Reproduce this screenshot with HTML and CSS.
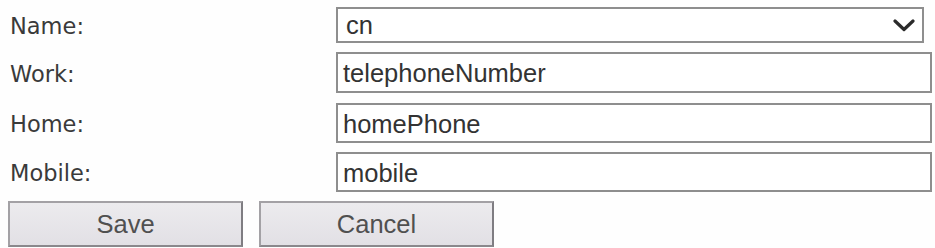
FILE: index.html
```html
<!DOCTYPE html>
<html>
<head>
<meta charset="utf-8">
<link rel="stylesheet" href="styles.css">
</head>
<body>
<div class="form">
  <div class="row r1">
    <div class="label">Name:</div>
    <div class="select"><span class="val">cn</span>
      <svg class="chev" width="22" height="13" viewBox="0 0 22 13"><path d="M2 2 L11 10.5 L20 2" fill="none" stroke="#2b2b2b" stroke-width="3.2" stroke-linecap="round" stroke-linejoin="round"/></svg>
    </div>
  </div>
  <div class="row r2">
    <div class="label">Work:</div>
    <div class="input">telephoneNumber</div>
  </div>
  <div class="row r3">
    <div class="label">Home:</div>
    <div class="input">homePhone</div>
  </div>
  <div class="row r4">
    <div class="label">Mobile:</div>
    <div class="input">mobile</div>
  </div>
  <div class="buttons">
    <div class="btn save">Save</div>
    <div class="btn cancel">Cancel</div>
  </div>
</div>
</body>
</html>
```
FILE: styles.css
```css
html, body {
  margin: 0;
  padding: 0;
  background: #fefefe;
  overflow: hidden;
}
.form {
  width: 935px;
  height: 248px;
  padding-top: 7px;
  box-sizing: border-box;
}
.row {
  display: flex;
  align-items: center;
  margin-bottom: 9px;
}
.r1 { height: 36px; }
.r2 { height: 41px; margin-bottom: 10px; }
.r3 { height: 40px; }
.r4 { height: 40px; }
.label {
  width: 326px;
  padding-left: 10px;
  box-sizing: border-box;
  font-family: "DejaVu Sans", Verdana, sans-serif;
  font-size: 22.5px;
  color: #3a3a3a;
  padding-top: 2px;
}
.select, .input {
  box-sizing: border-box;
  height: 100%;
  border: 2px solid #8e8e8e;
  background: #ffffff;
  font-family: "Liberation Sans", Arial, sans-serif;
  font-size: 25.5px;
  color: #333333;
  display: flex;
  align-items: center;
}
.select {
  margin-left: 10px;
  width: 588px;
  padding: 0 8px 0 8px;
  justify-content: space-between;
}
.select .val { padding-top: 1px; }
.input {
  margin-left: 10px;
  width: 596px;
  padding: 2px 5px 0 5px;
}
.chev { margin-right: -1px; margin-top: 1px; }
.buttons {
  display: flex;
  gap: 16px;
  padding-left: 8px;
}
.btn {
  box-sizing: border-box;
  width: 235px;
  height: 46px;
  border: 2px solid #a3a1a5;
  border-right-color: #7f7d82;
  border-bottom-color: #8a888c;
  background: linear-gradient(#ecebee, #e2e0e5);
  font-family: "Liberation Sans", Arial, sans-serif;
  font-size: 25.5px;
  color: #505050;
  display: flex;
  align-items: center;
  justify-content: center;
}
```
